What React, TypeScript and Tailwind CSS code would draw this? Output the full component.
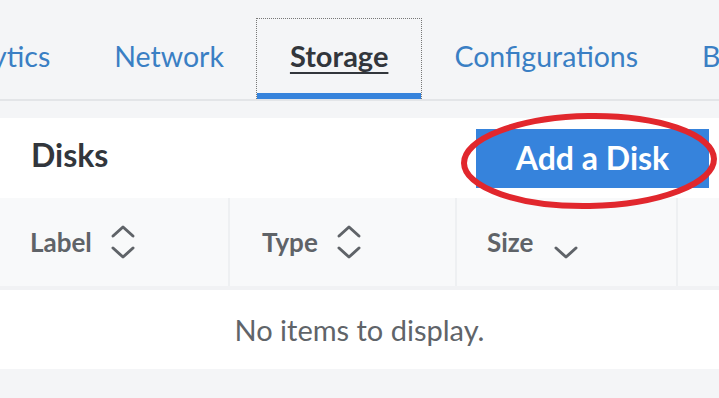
import React from "react";

function SortIcon() {
  return (
    <svg width="26" height="38" viewBox="0 0 26 38" fill="none" stroke="#5f6368" strokeWidth="3" strokeLinecap="round" strokeLinejoin="round">
      <path d="M3 13 L13 4 L23 13" />
      <path d="M3 25 L13 34 L23 25" />
    </svg>
  );
}

function SortDown() {
  return (
    <svg width="26" height="16" viewBox="0 0 26 16" fill="none" stroke="#5f6368" strokeWidth="3" strokeLinecap="round" strokeLinejoin="round">
      <path d="M3 3 L13 12 L23 3" />
    </svg>
  );
}

const tabs = ["Analytics", "Network", "Storage", "Configurations", "Backups"];

export default function App() {
  return (
    <div className="relative h-[398px] w-[719px] overflow-hidden bg-[#f4f5f7] font-['Lato',sans-serif]">
      <div className="flex h-[101px] border-b-2 border-[#e3e5e8]">
        <div className="ml-[-96px] flex items-stretch">
          {tabs.map((t) =>
            t === "Storage" ? (
              <div key={t} className="mt-[18px] flex flex-col border border-b-0 border-dotted border-[#777]">
                <div className="flex flex-1 items-center px-[33px]">
                  <span className="text-[29px] font-bold text-[#32363c] underline decoration-2 underline-offset-[5px]">{t}</span>
                </div>
                <div className="h-[6px] bg-[#3683dc]" />
              </div>
            ) : (
              <div key={t} className="mt-[18px] flex items-center px-[32px] pb-[4px]">
                <span className="whitespace-nowrap text-[28.5px] text-[#3a7fc4]">{t}</span>
              </div>
            )
          )}
        </div>
      </div>

      <div className="mt-[17px]">
        <div className="flex h-[80px] items-center justify-between bg-white pl-[31px] pr-[10px]">
          <h2 className="mb-[6px] text-[32px] font-bold text-[#32363c]">Disks</h2>
          <button className="flex h-[59px] w-[233px] items-center justify-center bg-[#3683dc] text-[32px] font-bold text-white">
            Add a Disk
          </button>
        </div>

        <div className="flex h-[92px] border-b-4 border-[#f1f2f4] bg-[#f8f9fa]">
          <div className="flex w-[230px] items-center gap-[18px] border-r-2 border-[#eef0f2] pl-[30px]">
            <span className="text-[26px] font-bold text-[#5f6368]">Label</span>
            <SortIcon />
          </div>
          <div className="flex w-[227px] items-center gap-[18px] border-r-2 border-[#eef0f2] pl-[32px]">
            <span className="text-[26px] font-bold text-[#5f6368]">Type</span>
            <SortIcon />
          </div>
          <div className="flex w-[221px] items-center gap-[20px] border-r-2 border-[#eef0f2] pl-[30px]">
            <span className="text-[26px] font-bold text-[#5f6368]">Size</span>
            <span className="mt-[22px]">
              <SortDown />
            </span>
          </div>
          <div className="flex-1" />
        </div>

        <div className="flex h-[79px] items-center justify-center bg-white">
          <span className="text-[29px] text-[#606469]">No items to display.</span>
        </div>
      </div>

      <svg className="pointer-events-none absolute left-[459px] top-[111px]" width="262" height="104" viewBox="0 0 262 104" fill="none">
        <ellipse cx="130" cy="50" rx="125" ry="45" stroke="#e1272d" strokeWidth="6" transform="rotate(-1 130 50)" />
      </svg>
    </div>
  );
}
